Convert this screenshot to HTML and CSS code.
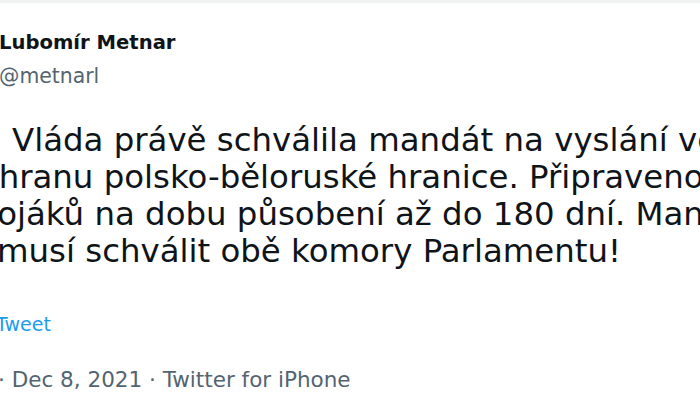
FILE: index.html
```html
<!DOCTYPE html>
<html lang="cs">
<head>
    <meta charset="UTF-8">
    <meta name="viewport" content="width=device-width, initial-scale=1.0">
    <title>Lubomír Metnar - Tweet</title>
    <link rel="stylesheet" href="styles.css">
</head>
<body>
    <div class="divider"></div>

    <div class="tweet">
        <div class="author">
            <div class="name">Lubomír Metnar</div>
            <div class="handle">@metnarl</div>
        </div>

        <!-- text je oříznutý levým okrajem snímku -->
        <div class="tweet-text">
            <div class="line line-1">Vláda právě schválila mandát na vyslání vojáků</div>
            <div class="line line-2">ochranu polsko-běloruské hranice. Připraveno je</div>
            <div class="line line-3">vojáků na dobu působení až do 180 dní. Mandát</div>
            <div class="line line-4">musí schválit obě komory Parlamentu!</div>
        </div>

        <div class="translate">Tweet</div>

        <div class="meta">· Dec 8, 2021 · Twitter for iPhone</div>
    </div>
</body>
</html>
```

FILE: styles.css
```css
body {
    margin: 0;
    background-color: #fff;
    font-family: "DejaVu Sans", "Liberation Sans", sans-serif;
    color: #0f1419;
    overflow: hidden;
}
.divider {
    height: 3px;
    background-color: #f1f2f2;
}
.tweet {
    padding-top: 27px;
}
.author {
    line-height: 26px;
}
.name {
    font-size: 19.6px;
    font-weight: bold;
    color: #0f1419;
    margin-left: -1px;
}
.handle {
    font-size: 20.4px;
    color: #536471;
    margin-top: 7px;
    margin-left: -1px;
}
.tweet-text {
    margin-top: 33px;
    font-size: 32.4px;
    line-height: 37px;
}
.line {
    white-space: nowrap;
}
.line-1 {
    margin-left: 12px;
}
.line-2 {
    margin-left: -39px;
}
.line-3 {
    margin-left: -22px;
}
.line-4 {
    margin-left: -3px;
}
.translate {
    margin-top: 41px;
    margin-left: -4px;
    font-size: 19px;
    line-height: 26px;
    color: #1d9bf0;
}
.meta {
    margin-top: 30px;
    margin-left: -2px;
    font-size: 21.5px;
    line-height: 26px;
    color: #536471;
}
```
